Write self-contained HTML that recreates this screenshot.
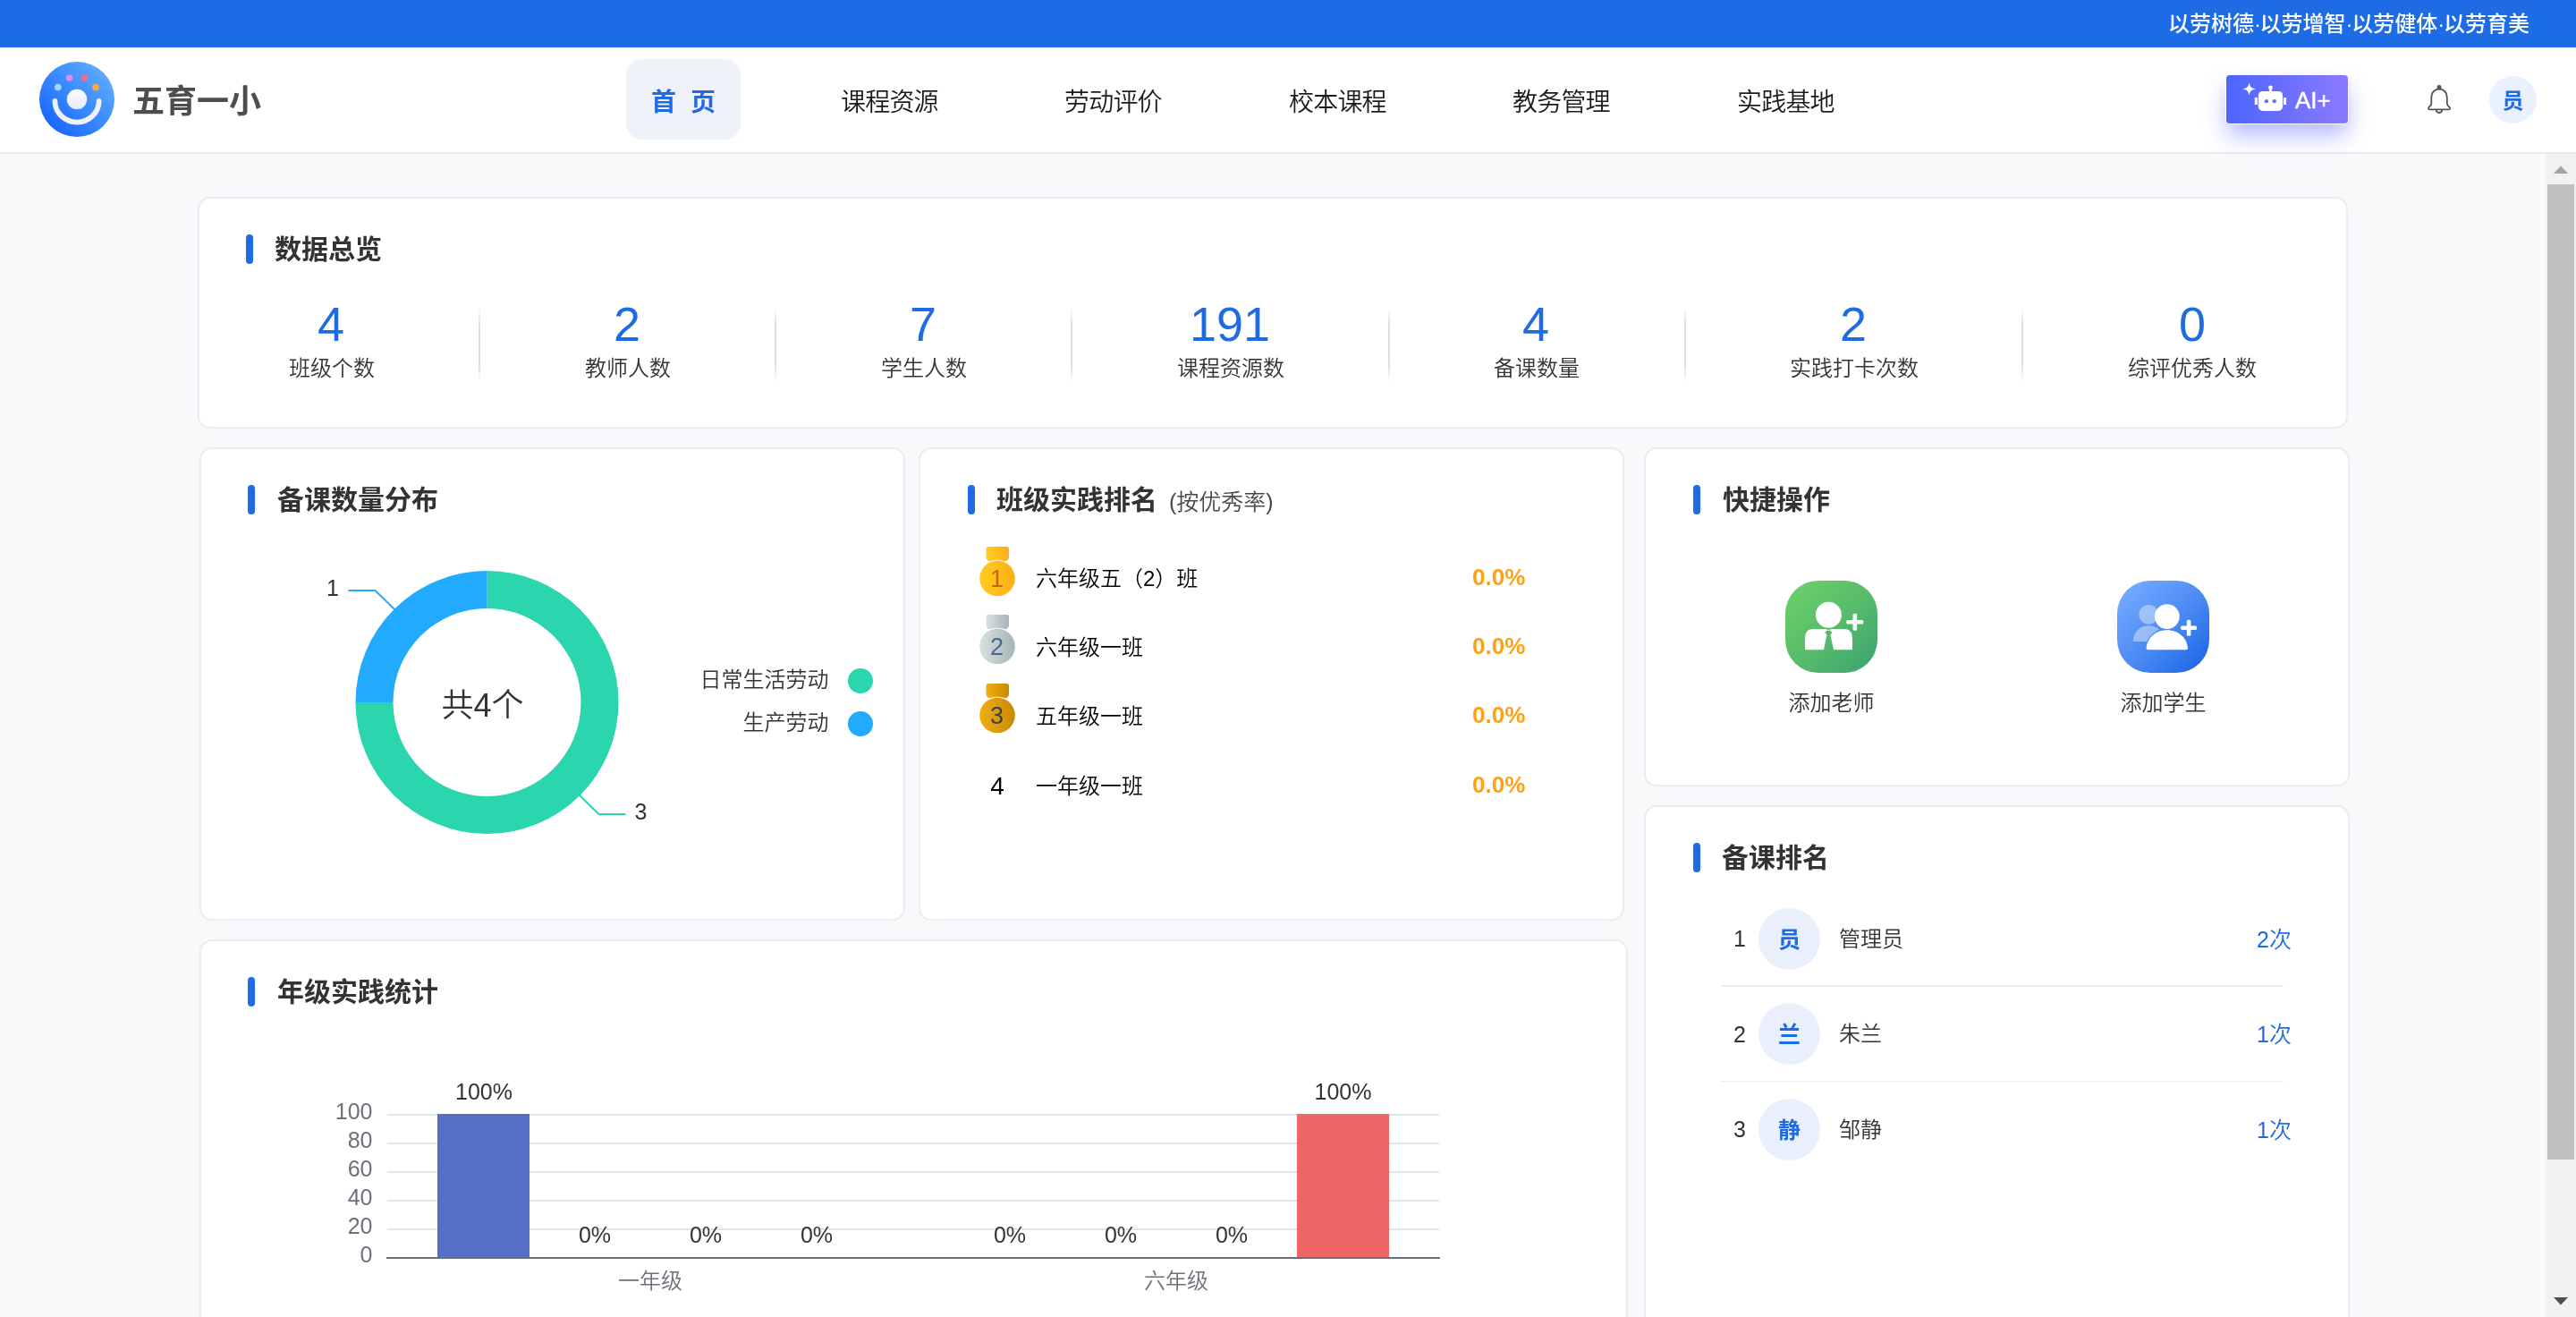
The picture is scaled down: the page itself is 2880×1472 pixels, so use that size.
<!DOCTYPE html>
<html lang="zh-CN">
<head>
<meta charset="utf-8">
<title>五育一小</title>
<style>
*{box-sizing:border-box;margin:0;padding:0}
html,body{width:2880px;height:1472px;overflow:hidden;background:#f9fafc}
body{font-family:"Liberation Sans","Noto Sans CJK SC",sans-serif;font-weight:350;color:#333;position:relative;-webkit-font-smoothing:antialiased}
#root{position:absolute;left:0;top:0;width:2880px;height:1472px;overflow:hidden;will-change:transform}
.abs{position:absolute}
.t{position:absolute;white-space:nowrap;line-height:1}
#topbar{position:absolute;left:0;top:0;width:2880px;height:53px;background:#1e6ce5}
#slogan{right:52px;top:15px;font-size:24px;color:#fff;font-weight:500}
#slogan i{font-style:normal;letter-spacing:-1.3px}
#header{position:absolute;left:0;top:53px;width:2880px;height:119px;background:#fff;border-bottom:2px solid #e8eaea}
#brand{left:148px;top:96px;font-size:36px;font-weight:700;color:#4d4d4d}
.nav{font-size:28px;color:#1a1a1a;top:101px;letter-spacing:-0.8px}
#navact{position:absolute;left:700px;top:66px;width:128px;height:90px;border-radius:18px;background:#eff2f8}
#navact span{position:absolute;left:0;width:128px;text-align:center;top:35px;font-size:28px;font-weight:700;color:#1f6be3;line-height:1;white-space:pre;word-spacing:8px}
#aibtn{position:absolute;left:2489px;top:84px;width:136px;height:54px;border-radius:4px;background:linear-gradient(90deg,#4d65ff 0%,#6b6fff 50%,#8a7aff 100%);box-shadow:0 0 0 1px rgba(255,255,255,.85),0 14px 26px -1px rgba(84,100,255,.45)}
#aitxt{left:2566px;top:99px;font-size:26px;color:#fff;font-weight:400;-webkit-text-stroke:0.45px #fff}
#avatar{position:absolute;left:2783px;top:85px;width:53px;height:53px;border-radius:50%;background:#e9f1fd}
#avatar span{position:absolute;left:0;top:16px;width:53px;text-align:center;font-size:24px;font-weight:700;color:#1f6be3;line-height:1}
#sbar{position:absolute;left:2846px;top:172px;width:34px;height:1300px;background:#f1f1f1}
#sthumb{position:absolute;left:2px;top:34px;width:30px;height:1090px;background:#c1c1c1}
.card{position:absolute;background:#fff;border:2px solid #e9ecf1;border-radius:14px;box-shadow:0 0 14px rgba(120,130,160,.03)}
.bar{position:absolute;width:8px;height:33px;border-radius:4px;background:#1f6be3}
.h{position:absolute;white-space:nowrap;line-height:1;font-size:30px;font-weight:700;color:#333}
.num{position:absolute;white-space:nowrap;line-height:1;font-size:54px;color:#1f6be3;text-align:center;width:200px;margin-left:-100px}
.lab{position:absolute;white-space:nowrap;line-height:1;font-size:24px;color:#333;text-align:center;width:200px;margin-left:-100px}
.div{position:absolute;width:2px;height:84px;top:343px;background:linear-gradient(180deg,rgba(222,222,222,0) 0%,#dedede 24%,#dedede 76%,rgba(222,222,222,0) 100%)}

.sub{position:absolute;white-space:nowrap;line-height:1;font-size:25px;color:#484848}
.rk{position:absolute;white-space:nowrap;line-height:1;font-size:24px;color:#000;left:1158px}
.pc{position:absolute;white-space:nowrap;line-height:1;font-size:26px;font-weight:700;color:#ffa116;left:1646px}
.medal{position:absolute;left:1093px;width:44px;height:60px}
.qal{position:absolute;white-space:nowrap;line-height:1;font-size:24px;color:#333;width:200px;margin-left:-100px;text-align:center}
.pn{position:absolute;white-space:nowrap;line-height:1;font-size:25px;color:#333;width:40px;text-align:center;left:1925px}
.pa{position:absolute;left:1966px;width:69px;height:69px;border-radius:50%;background:#e9f0fc;color:#1f6be3;font-weight:700;font-size:25px;line-height:71px;text-align:center}
.pnm{position:absolute;white-space:nowrap;line-height:1;font-size:24px;color:#333;left:2056px}
.pct{position:absolute;white-space:nowrap;line-height:1;font-size:25px;color:#1f6be3;right:318px}
.sep{position:absolute;left:1924px;width:629px;height:2px;background:#ebedf0}
@media (max-width:1800px){html,body{width:1440px;height:736px}#root{transform:scale(.5);transform-origin:0 0}}
</style>
</head>
<body>
<div id="root">
<div id="topbar"></div>
<div class="t" id="slogan">以劳树德<i>·</i>以劳增智<i>·</i>以劳健体<i>·</i>以劳育美</div>
<div id="header"></div>
<svg class="abs" style="left:44px;top:69px" width="84" height="84" viewBox="0 0 84 84">
<defs>
<linearGradient id="lg1" x1="0.15" y1="0.85" x2="0.85" y2="0.15"><stop offset="0" stop-color="#1a69ff"/><stop offset="1" stop-color="#5aa9ff"/></linearGradient>
<linearGradient id="lg2" x1="0" y1="0" x2="0" y2="1"><stop offset="0" stop-color="#ffffff"/><stop offset="1" stop-color="#e6e8fb"/></linearGradient>
</defs>
<circle cx="42" cy="42" r="42" fill="url(#lg1)"/>
<circle cx="42" cy="42" r="11.2" fill="url(#lg2)"/>
<path d="M17.4 44 A24.6 23.6 0 0 0 66.6 44" fill="none" stroke="#f1f1fd" stroke-width="5.8" stroke-linecap="round"/>
<circle cx="33.6" cy="18" r="3.8" fill="#dc8cf5"/>
<circle cx="50.3" cy="18" r="3.8" fill="#ff6584"/>
<circle cx="20.8" cy="28.5" r="3.8" fill="#9edcff"/>
<circle cx="63" cy="28.5" r="3.8" fill="#ffa848"/>
</svg>
<div class="t" id="brand">五育一小</div>
<div id="navact"><span>首 页</span></div>
<div class="t nav" style="left:940px">课程资源</div>
<div class="t nav" style="left:1190px">劳动评价</div>
<div class="t nav" style="left:1441px">校本课程</div>
<div class="t nav" style="left:1691px">教务管理</div>
<div class="t nav" style="left:1942px">实践基地</div>
<div id="aibtn"></div>
<div class="t" id="aitxt">AI+</div>
<div id="avatar"><span>员</span></div>
<div id="sbar"><div id="sthumb"></div></div>
<svg class="abs" style="left:2500px;top:88px" width="64" height="44" viewBox="0 0 64 44">
<path d="M14.6 4.2 C15.5 9.2 17 10.5 22.2 11.4 C17 12.3 15.5 13.6 14.6 18.6 C13.7 13.6 12.2 12.3 7 11.4 C12.2 10.5 13.7 9.2 14.6 4.2 Z" fill="#fff"/>
<rect x="24.8" y="13.9" width="27.3" height="22" rx="4.8" fill="#fff"/>
<rect x="37.1" y="10" width="2.7" height="5" fill="#fff"/>
<circle cx="38.45" cy="9.8" r="2.4" fill="#fff"/>
<rect x="20.8" y="21" width="3.1" height="8.1" rx="0.4" fill="#fff"/>
<rect x="53" y="21" width="3.1" height="8.1" rx="0.4" fill="#fff"/>
<circle cx="33.9" cy="25.2" r="2.15" fill="#6167ff"/>
<circle cx="42.8" cy="25.2" r="2.15" fill="#686bff"/>
</svg>
<svg class="abs" style="left:2707px;top:91px" width="40" height="40" viewBox="0 0 40 40">
<rect x="17.6" y="3.9" width="4.9" height="5.4" rx="2.2" fill="#555"/>
<path d="M20.05 8.5 C15.2 8.5 11.3 12.2 11.3 17.4 V24 C11.3 26 10.7 27 9.4 28 C8.1 29 7.9 29.4 7.9 30 C7.9 30.9 8.5 31.4 9.4 31.4 H30.7 C31.6 31.4 32.2 30.9 32.2 30 C32.2 29.4 32 29 30.7 28 C29.4 27 28.8 26 28.8 24 V17.4 C28.8 12.2 24.9 8.5 20.05 8.5 Z" fill="none" stroke="#555" stroke-width="1.8" stroke-linejoin="round"/>
<path d="M16.8 31.8 C16.9 33.7 18.2 35 20.05 35 C21.9 35 23.2 33.7 23.3 31.8" fill="none" stroke="#555" stroke-width="1.8" stroke-linecap="round"/>
</svg>
<svg class="abs" style="left:2846px;top:172px" width="34" height="1300" viewBox="0 0 34 1300">
<path d="M9 22 L17 13.5 L25 22 Z" fill="#a3a3a3"/>
<path d="M9 1278 L17 1286.5 L25 1278 Z" fill="#505050"/>
</svg>

<!-- CARD1 -->
<div class="card" style="left:221px;top:220px;width:2404px;height:259px"></div>
<div class="bar" style="left:275px;top:262px"></div>
<div class="h" style="left:307px;top:264px">数据总览</div>
<div class="num" style="left:370px;top:335px">4</div><div class="lab" style="left:371px;top:400px">班级个数</div>
<div class="div" style="left:535px"></div>
<div class="num" style="left:701px;top:335px">2</div><div class="lab" style="left:702px;top:400px">教师人数</div>
<div class="div" style="left:866px"></div>
<div class="num" style="left:1032px;top:335px">7</div><div class="lab" style="left:1033px;top:400px">学生人数</div>
<div class="div" style="left:1197px"></div>
<div class="num" style="left:1375px;top:335px">191</div><div class="lab" style="left:1376px;top:400px">课程资源数</div>
<div class="div" style="left:1552px"></div>
<div class="num" style="left:1717px;top:335px">4</div><div class="lab" style="left:1718px;top:400px">备课数量</div>
<div class="div" style="left:1883px"></div>
<div class="num" style="left:2072px;top:335px">2</div><div class="lab" style="left:2073px;top:400px">实践打卡次数</div>
<div class="div" style="left:2260px"></div>
<div class="num" style="left:2451px;top:335px">0</div><div class="lab" style="left:2451px;top:400px">综评优秀人数</div>
<!-- CARDA -->
<div class="card" style="left:223px;top:500px;width:789px;height:529px"></div>
<div class="bar" style="left:277px;top:542px"></div>
<div class="h" style="left:310px;top:544px">备课数量分布</div>
<svg class="abs" style="left:224px;top:501px" width="787" height="526" viewBox="0 0 787 526" font-family="Liberation Sans, Noto Sans CJK SC, sans-serif" font-weight="350">
<path d="M320.5 137.0 A147 147 0 1 1 173.5 284.0 L215.5 284.0 A105 105 0 1 0 320.5 179.0 Z" fill="#2bd5ae"/>
<path d="M173.5 284.0 A147 147 0 0 1 320.5 137.0 L320.5 179.0 A105 105 0 0 0 215.5 284.0 Z" fill="#21aafe"/>
<polyline points="217.0 180.0 195.5 159.0 165.5 159.0" fill="none" stroke="#21aafe" stroke-width="2"/>
<polyline points="423.5 387.5 445.5 409.0 475.5 409.0" fill="none" stroke="#2bd5ae" stroke-width="2"/>
<text x="148" y="165" font-size="25" fill="#333" text-anchor="middle">1</text>
<text x="492.5" y="415" font-size="25" fill="#333" text-anchor="middle">3</text>
<text x="315.5" y="300" font-size="36" fill="#333" text-anchor="middle">共4个</text>
<text x="702.5" y="266.5" font-size="24" fill="#333" text-anchor="end">日常生活劳动</text>
<text x="702.5" y="314.5" font-size="24" fill="#333" text-anchor="end">生产劳动</text>
<circle cx="738" cy="260" r="14" fill="#2bd5ae"/>
<circle cx="738" cy="308" r="14" fill="#21aafe"/>
</svg>
<!-- CARDB -->
<div class="card" style="left:1027px;top:500px;width:789px;height:529px"></div>
<div class="bar" style="left:1082px;top:542px"></div>
<div class="h" style="left:1114px;top:544px">班级实践排名</div>
<div class="sub" style="left:1307px;top:549px">(按优秀率)</div>
<svg class="medal" style="top:608.5px" viewBox="0 0 44 60" font-family="Liberation Sans, Noto Sans CJK SC, sans-serif" font-weight="350">
<defs><linearGradient id="mg1" x1="0" y1="0" x2="1" y2="0"><stop offset="0" stop-color="#ffcd1d"/><stop offset="1" stop-color="#ffad1a"/></linearGradient></defs>
<path d="M12 2 H32.5 Q35 2 35 4.5 V13 Q35 17.5 30.5 18.5 H13.5 Q9.5 17.5 9.5 13 V4.5 Q9.5 2 12 2 Z" fill="url(#mg1)"/>
<circle cx="22" cy="37.5" r="21" fill="#fff" opacity="0.75"/>
<circle cx="22" cy="37.5" r="19.8" fill="url(#mg1)"/>
<text x="21.5" y="47" font-size="27" fill="#c26a00" text-anchor="middle">1</text>
</svg>
<svg class="medal" style="top:684.5px" viewBox="0 0 44 60" font-family="Liberation Sans, Noto Sans CJK SC, sans-serif" font-weight="350">
<defs><linearGradient id="mg2" x1="0" y1="0" x2="1" y2="0"><stop offset="0" stop-color="#d7e1e2"/><stop offset="1" stop-color="#a5b5b7"/></linearGradient></defs>
<path d="M12 2 H32.5 Q35 2 35 4.5 V13 Q35 17.5 30.5 18.5 H13.5 Q9.5 17.5 9.5 13 V4.5 Q9.5 2 12 2 Z" fill="url(#mg2)"/>
<circle cx="22" cy="37.5" r="21" fill="#fff" opacity="0.75"/>
<circle cx="22" cy="37.5" r="19.8" fill="url(#mg2)"/>
<text x="21.5" y="47" font-size="27" fill="#4d6496" text-anchor="middle">2</text>
</svg>
<svg class="medal" style="top:761.5px" viewBox="0 0 44 60" font-family="Liberation Sans, Noto Sans CJK SC, sans-serif" font-weight="350">
<defs><linearGradient id="mg3" x1="0" y1="0" x2="1" y2="0"><stop offset="0" stop-color="#f1ae13"/><stop offset="1" stop-color="#c78900"/></linearGradient></defs>
<path d="M12 2 H32.5 Q35 2 35 4.5 V13 Q35 17.5 30.5 18.5 H13.5 Q9.5 17.5 9.5 13 V4.5 Q9.5 2 12 2 Z" fill="url(#mg3)"/>
<circle cx="22" cy="37.5" r="21" fill="#fff" opacity="0.75"/>
<circle cx="22" cy="37.5" r="19.8" fill="url(#mg3)"/>
<text x="21.5" y="47" font-size="27" fill="#3b4050" text-anchor="middle">3</text>
</svg>
<div class="t" style="left:1095px;width:40px;text-align:center;top:865px;font-size:28px;color:#000">4</div>
<div class="rk" style="top:634.5px">六年级五（2）班</div><div class="pc" style="top:631.5px">0.0%</div>
<div class="rk" style="top:711.5px">六年级一班</div><div class="pc" style="top:708.5px">0.0%</div>
<div class="rk" style="top:789px">五年级一班</div><div class="pc" style="top:786px">0.0%</div>
<div class="rk" style="top:867px">一年级一班</div><div class="pc" style="top:864px">0.0%</div>
<!-- CARDC -->
<div class="card" style="left:1838px;top:500px;width:789px;height:379px"></div>
<div class="bar" style="left:1893px;top:542px"></div>
<div class="h" style="left:1926px;top:544px">快捷操作</div>
<svg class="abs" style="left:1996px;top:649px" width="103" height="103" viewBox="0 0 103 103">
<defs><linearGradient id="qg1" x1="0.1" y1="0.1" x2="0.95" y2="0.95"><stop offset="0" stop-color="#69ce69"/><stop offset="0.5" stop-color="#57bb6b"/><stop offset="1" stop-color="#3da46f"/></linearGradient></defs>
<rect x="0" y="0" width="103" height="103" rx="37" fill="url(#qg1)"/>
<circle cx="48.4" cy="38.3" r="14.5" fill="#fff"/>
<path d="M31.5 54 H45.6 L48.4 56 L51.2 54 H65.5 Q75 54 75 63.5 V77.2 H54 L50.4 60.4 L52.6 57.8 L48.4 54.4 L44.2 57.8 L46.4 60.4 L43 77.2 H22 V63.5 Q22 54 31.5 54 Z" fill="#fff"/>
<rect x="68.3" y="44" width="19" height="4.6" rx="1.6" fill="#fff"/>
<rect x="75.5" y="36.8" width="4.6" height="19" rx="1.6" fill="#fff"/>
</svg>
<div class="qal" style="left:2047.5px;top:773.5px">添加老师</div>
<svg class="abs" style="left:2367px;top:649px" width="103" height="103" viewBox="0 0 103 103">
<defs><linearGradient id="qg2" x1="0.1" y1="0.1" x2="0.95" y2="0.95"><stop offset="0" stop-color="#72a9ff"/><stop offset="0.5" stop-color="#4c8bf3"/><stop offset="1" stop-color="#1c66e6"/></linearGradient></defs>
<rect x="0" y="0" width="103" height="103" rx="37" fill="url(#qg2)"/>
<circle cx="35.3" cy="37.8" r="10.9" fill="#fff" opacity="0.4"/>
<path d="M17.8 68 C17.8 57.5 25.5 50.2 35.3 50.2 C40 50.2 44 51.8 47 54.5 C40 58 35 63 33.5 68 Z" fill="#fff" opacity="0.4"/>
<circle cx="55.8" cy="40.1" r="13.9" fill="#fff"/>
<path d="M32.6 75.3 C33.6 63.6 43.4 55.2 55.8 55.2 C68.2 55.2 78 63.6 79 75.3 Q79 77.3 77 77.3 H34.6 Q32.6 77.3 32.6 75.3 Z" fill="#fff"/>
<rect x="71.1" y="50.5" width="18" height="4.6" rx="1.6" fill="#fff"/>
<rect x="77.8" y="43.8" width="4.6" height="18" rx="1.6" fill="#fff"/>
</svg>
<div class="qal" style="left:2418.5px;top:773.5px">添加学生</div>
<!-- CARDD -->
<div class="card" style="left:1838px;top:900px;width:789px;height:640px"></div>
<div class="bar" style="left:1893px;top:942px"></div>
<div class="h" style="left:1925px;top:944px">备课排名</div>
<div class="pn" style="top:1037px">1</div><div class="pa" style="top:1014.5px">员</div><div class="pnm" style="top:1037.5px">管理员</div><div class="pct" style="top:1037.5px">2次</div>
<div class="pn" style="top:1143.5px">2</div><div class="pa" style="top:1121.0px">兰</div><div class="pnm" style="top:1144px">朱兰</div><div class="pct" style="top:1144px">1次</div>
<div class="pn" style="top:1250px">3</div><div class="pa" style="top:1227.5px">静</div><div class="pnm" style="top:1250.5px">邹静</div><div class="pct" style="top:1250.5px">1次</div>
<div class="sep" style="top:1101px"></div>
<div class="sep" style="top:1207.5px;height:1.5px"></div>
<!-- CARDE -->
<div class="card" style="left:223px;top:1050px;width:1597px;height:500px"></div>
<div class="bar" style="left:277px;top:1092px"></div>
<div class="h" style="left:310px;top:1094px">年级实践统计</div>
<svg class="abs" style="left:224px;top:1051px" width="1595" height="421" viewBox="0 0 1595 421" font-family="Liberation Sans, Noto Sans CJK SC, sans-serif" font-weight="350">
<line x1="209" y1="195" x2="1385" y2="195" stroke="#e0e6f1" stroke-width="2"/>
<line x1="209" y1="227" x2="1385" y2="227" stroke="#e0e6f1" stroke-width="2"/>
<line x1="209" y1="259" x2="1385" y2="259" stroke="#e0e6f1" stroke-width="2"/>
<line x1="209" y1="291" x2="1385" y2="291" stroke="#e0e6f1" stroke-width="2"/>
<line x1="209" y1="323" x2="1385" y2="323" stroke="#e0e6f1" stroke-width="2"/>
<text x="192.5" y="200" font-size="25" fill="#6e7079" text-anchor="end">100</text>
<text x="192.5" y="232" font-size="25" fill="#6e7079" text-anchor="end">80</text>
<text x="192.5" y="264" font-size="25" fill="#6e7079" text-anchor="end">60</text>
<text x="192.5" y="296" font-size="25" fill="#6e7079" text-anchor="end">40</text>
<text x="192.5" y="328" font-size="25" fill="#6e7079" text-anchor="end">20</text>
<text x="192.5" y="360" font-size="25" fill="#6e7079" text-anchor="end">0</text>
<rect x="265" y="194" width="103" height="161" fill="#5470c6"/>
<rect x="1226" y="194" width="103" height="161" fill="#ee6666"/>
<line x1="208" y1="355" x2="1386" y2="355" stroke="#6e7079" stroke-width="2"/>
<text x="441" y="338" font-size="25" fill="#333" text-anchor="middle">0%</text>
<text x="565" y="338" font-size="25" fill="#333" text-anchor="middle">0%</text>
<text x="689" y="338" font-size="25" fill="#333" text-anchor="middle">0%</text>
<text x="905" y="338" font-size="25" fill="#333" text-anchor="middle">0%</text>
<text x="1029" y="338" font-size="25" fill="#333" text-anchor="middle">0%</text>
<text x="1153" y="338" font-size="25" fill="#333" text-anchor="middle">0%</text>
<text x="317" y="178" font-size="25" fill="#333" text-anchor="middle">100%</text>
<text x="1277.5" y="178" font-size="25" fill="#333" text-anchor="middle">100%</text>
<text x="503" y="389" font-size="24" fill="#6e7079" text-anchor="middle">一年级</text>
<text x="1091" y="389" font-size="24" fill="#6e7079" text-anchor="middle">六年级</text>
</svg>
</div>
</body>
</html>
